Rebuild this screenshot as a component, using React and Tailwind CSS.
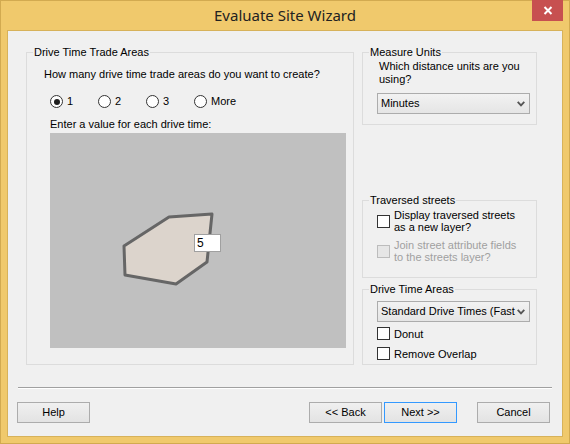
import React from 'react'

const FONT = { fontFamily: '"Liberation Sans", Arial, sans-serif' }

function Radio({ label, checked }) {
  return (
    <div className="flex items-center w-[48px] h-[13px]">
      <span className="flex items-center justify-center w-[13px] h-[13px] rounded-full border border-[#333] bg-white shrink-0">
        {checked && <span className="w-[6px] h-[6px] rounded-full bg-[#1f1f1f]" />}
      </span>
      <span className="ml-[4px] leading-[13px]">{label}</span>
    </div>
  )
}

function Check({ disabled, lines }) {
  return (
    <div className="flex items-center gap-[4px]">
      <span
        className={`w-[13px] h-[13px] shrink-0 border ${
          disabled ? 'border-[#bcbcbc] bg-[#e6e6e6]' : 'border-[#333] bg-white'
        }`}
      />
      <div className={`leading-[12px] ${disabled ? 'text-[#a0a0a0]' : 'text-black'}`}>
        {lines.map(l => (
          <div key={l}>{l}</div>
        ))}
      </div>
    </div>
  )
}

function Select({ value }) {
  return (
    <div className="flex items-center w-[153px] h-[21px] border border-[#acacac] bg-gradient-to-b from-[#f2f2f2] to-[#e5e5e5]">
      <span className="flex-1 pl-[3px] whitespace-nowrap leading-[13px]">{value}</span>
      <svg width="8" height="6" viewBox="0 0 8 6" className="mr-[4px] ml-[2px] shrink-0">
        <path d="M0.7 0.8 L4 4.4 L7.3 0.8" fill="none" stroke="#555" strokeWidth="1.8" />
      </svg>
    </div>
  )
}

function Group({ title, className, children }) {
  return (
    <fieldset className={`border border-[#dcdcdc] ${className}`}>
      <legend className="ml-[6px] px-[1px] leading-[12px]">{title}</legend>
      {children}
    </fieldset>
  )
}

function Button({ children, focused }) {
  return (
    <div
      className={`w-[73px] h-[21px] flex items-center justify-center border bg-gradient-to-b from-[#f0f0f0] to-[#e3e3e3] ${
        focused ? 'border-[#3399ff]' : 'border-[#acacac]'
      }`}
    >
      {children}
    </div>
  )
}

export default function App() {
  return (
    <div className="w-[570px] h-[444px] bg-[#f0c96c] border border-[#d2aa50] flex flex-col text-[11px] text-black" style={FONT}>
      {/* title bar */}
      <div className="relative h-[29px] flex items-center justify-center">
        <span
          className="text-[15px] text-[#222]"
          style={{ fontFamily: '"Segoe UI", "Noto Sans", sans-serif' }}
        >
          Evaluate Site Wizard
        </span>
        <div className="absolute top-[-1px] right-[6px] w-[31px] h-[21px] bg-[#c75050] flex items-center justify-center">
          <svg width="10" height="9" viewBox="0 0 10 9">
            <path d="M1.5 1 L8.5 8 M8.5 1 L1.5 8" stroke="#fff" strokeWidth="2" />
          </svg>
        </div>
      </div>

      {/* client area */}
      <div className="ml-[6px] w-[556px] h-[407px] bg-[#f0f0f0] border border-[#d7b25a] flex flex-col">
        <div className="flex mt-[15px]">
          <Group title="Drive Time Trade Areas" className="ml-[18px] w-[328px] h-[319px] flex flex-col">
            <div className="ml-[17px] mt-[10px] leading-[13px]">How many drive time trade areas do you want to create?</div>
            <div className="flex ml-[23px] mt-[14px]">
              <Radio label="1" checked />
              <Radio label="2" />
              <Radio label="3" />
              <Radio label="More" />
            </div>
            <div className="ml-[23px] mt-[10px] leading-[13px]">Enter a value for each drive time:</div>
            <div className="relative ml-[23px] mt-[2px] w-[296px] h-[215px] bg-[#c0c0c0]">
              <svg width="296" height="215" viewBox="0 0 296 215">
                <polygon
                  points="119,84 162,81 157,129 126,151 75,142 74,113"
                  fill="#dcd4cc"
                  stroke="#666"
                  strokeWidth="3"
                  strokeLinejoin="round"
                />
              </svg>
              <div className="absolute left-[144px] top-[101px] w-[27px] h-[18px] bg-white border border-[#a0a0a0] flex items-center pl-[2px] text-[12px]">
                5
              </div>
            </div>
          </Group>

          <div className="ml-[8px] w-[175px] flex flex-col">
            <Group title="Measure Units" className="h-[79px] flex flex-col">
              <div className="ml-[16px] mt-[2px] leading-[13px]">
                Which distance units are you
                <br />
                using?
              </div>
              <div className="ml-[14px] mt-[7px]">
                <Select value="Minutes" />
              </div>
            </Group>

            <Group title="Traversed streets" className="mt-[69px] h-[84px] flex flex-col">
              <div className="ml-[14px] mt-[3px] flex flex-col gap-[6px]">
                <Check lines={['Display traversed streets', 'as a new layer?']} />
                <Check disabled lines={['Join street attribute fields', 'to the streets layer?']} />
              </div>
            </Group>

            <Group title="Drive Time Areas" className="mt-[5px] h-[82px] flex flex-col">
              <div className="ml-[14px] mt-[6px]">
                <Select value="Standard Drive Times (Fast" />
              </div>
              <div className="ml-[14px] mt-[5px] flex flex-col gap-[7px]">
                <Check lines={['Donut']} />
                <Check lines={['Remove Overlap']} />
              </div>
            </Group>
          </div>
        </div>

        <div className="ml-[10px] mt-[22px] w-[534px] border-t border-t-[#a0a0a0] border-b border-b-white" />

        <div className="flex mt-[13px] ml-[9px]">
          <Button>Help</Button>
          <div className="ml-[219px]">
            <Button>&lt;&lt; Back</Button>
          </div>
          <div className="ml-[2px]">
            <Button focused>Next &gt;&gt;</Button>
          </div>
          <div className="ml-[20px]">
            <Button>Cancel</Button>
          </div>
        </div>
      </div>
    </div>
  )
}
